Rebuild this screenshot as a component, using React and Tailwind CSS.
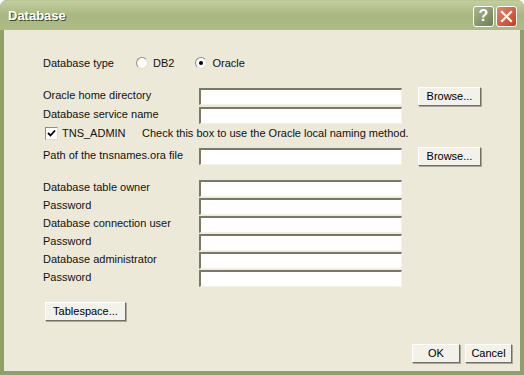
import React from "react";

const font = { fontFamily: '"Liberation Sans", Arial, sans-serif' };

function TextBox() {
  return (
    <div className="h-[17px] w-[203px] bg-white border-t-2 border-l-2 border-r border-b border-t-[#7a7868] border-l-[#7a7868] border-r-[#f4f2e8] border-b-[#f4f2e8]" />
  );
}

function Button({ children, className = "" }) {
  return (
    <div
      className={
        "h-[19px] flex items-center justify-center bg-[#f2f1ea] border border-t-white border-l-white border-r-[#716f64] border-b-[#716f64] shadow-[1px_1px_0_#aca899] text-[11px] text-black " +
        className
      }
    >
      {children}
    </div>
  );
}

function Row({ label, browse }) {
  return (
    <div className="flex items-center h-[17px]">
      <div className="w-[156px] text-[11px] text-[#111] -mt-[2px]">{label}</div>
      <TextBox />
      {browse && <Button className="ml-[16px] w-[63px]">Browse...</Button>}
    </div>
  );
}

function Radio({ checked, label }) {
  return (
    <div className="flex items-center gap-[5px]">
      <div className="w-[12px] h-[12px] rounded-full bg-white border border-t-[#8f8d80] border-l-[#8f8d80] border-r-[#e0ddd0] border-b-[#e0ddd0] flex items-center justify-center">
        {checked && <div className="w-[4px] h-[4px] rounded-full bg-black" />}
      </div>
      <span className="text-[11px]">{label}</span>
    </div>
  );
}

export default function App() {
  return (
    <div className="w-[524px] h-[375px] bg-[#8da06a] rounded-t-[7px] overflow-hidden flex flex-col" style={font}>
      {/* Title bar */}
      <div className="h-[30px] shrink-0 flex items-center justify-between pl-[8px] pr-[7px] bg-gradient-to-b from-[#c3cea0] via-[#a8b67f] to-[#aebb87] border-t border-[#b9c594]">
        <span
          className="text-white font-bold text-[13px]"
          style={{ textShadow: "1px 1px 0 #3b4a20" }}
        >
          Database
        </span>
        <div className="flex gap-[2px] mt-[1px]">
          <div className="w-[21px] h-[21px] rounded-[3px] border border-white bg-gradient-to-br from-[#a9b58f] to-[#6f7d54] flex items-center justify-center text-white font-bold text-[16px] leading-none">
            ?
          </div>
          <div className="w-[21px] h-[21px] rounded-[3px] border border-white bg-gradient-to-br from-[#e2856a] to-[#c23d20] flex items-center justify-center">
            <svg width="13" height="13" viewBox="0 0 13 13">
              <path d="M2 2 L11 11 M11 2 L2 11" stroke="white" strokeWidth="2.2" strokeLinecap="square" />
            </svg>
          </div>
        </div>
      </div>

      {/* Client area */}
      <div className="flex-1 mx-[4px] mb-[4px] bg-[#ece9d8] pl-[39px] pr-[8px] text-[#111] flex flex-col">
        <div className="flex items-center h-[14px] mt-[26px]">
          <div className="w-[93px] text-[11px]">Database type</div>
          <Radio label="DB2" />
          <div className="w-[21px]" />
          <Radio checked label="Oracle" />
        </div>

        <div className="mt-[18px] flex flex-col gap-[2px]">
          <Row label="Oracle home directory" browse />
          <Row label="Database service name" />
        </div>

        <div className="flex items-center h-[13px] mt-[3px] ml-[2px]">
          <div className="w-[13px] h-[13px] bg-white border border-t-[#8f8d80] border-l-[#8f8d80] border-r-[#e0ddd0] border-b-[#e0ddd0] flex items-center justify-center">
            <svg width="9" height="9" viewBox="0 0 9 9">
              <path d="M1 4 L3.5 6.5 L8 1.5" stroke="black" strokeWidth="1.8" fill="none" />
            </svg>
          </div>
          <span className="ml-[4px] w-[80px] text-[11px]">TNS_ADMIN</span>
          <span className="text-[11px]">Check this box to use the Oracle local naming method.</span>
        </div>

        <div className="mt-[8px]">
          <Row label="Path of the tnsnames.ora file" browse />
        </div>

        <div className="mt-[15px] flex flex-col gap-[1px]">
          <Row label="Database table owner" />
          <Row label="Password" />
          <Row label="Database connection user" />
          <Row label="Password" />
          <Row label="Database administrator" />
          <Row label="Password" />
        </div>

        <div className="mt-[15px] ml-[2px]">
          <Button className="w-[81px]">Tablespace...</Button>
        </div>

        <div className="flex-1" />
        <div className="flex justify-end gap-[5px] mb-[8px]">
          <Button className="w-[48px]">OK</Button>
          <Button className="w-[47px]">Cancel</Button>
        </div>
      </div>
    </div>
  );
}
